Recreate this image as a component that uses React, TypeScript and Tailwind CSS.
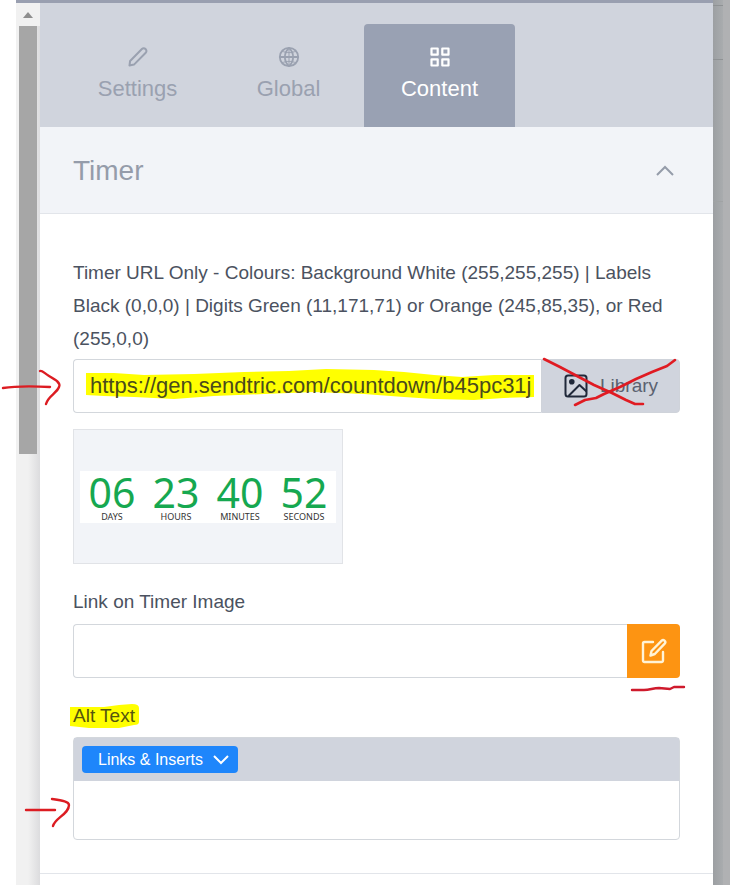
import { useState } from "react";
import type { ReactNode } from "react";
import clsx from "clsx";

const tabs = [
  { id: "settings", label: "Settings", icon: <PencilIcon /> },
  { id: "global", label: "Global", icon: <GlobeIcon /> },
  { id: "content", label: "Content", icon: <GridIcon /> },
];

const countdown = [
  { value: "06", label: "DAYS" },
  { value: "23", label: "HOURS" },
  { value: "40", label: "MINUTES" },
  { value: "52", label: "SECONDS" },
];

function PencilIcon() {
  return (
    <svg width="22" height="22" viewBox="0 0 22 22" fill="none" stroke="currentColor" strokeWidth="2" strokeLinejoin="round">
      <path d="M2.500 19.500l.6-4.500L14.900 3a2.500 2.500 0 0 1 3.600 0l.2.200a2.500 2.500 0 0 1 0 3.600L7 18.600z" />
    </svg>
  );
}

function GlobeIcon() {
  return (
    <svg width="22" height="22" viewBox="0 0 22 22" fill="none" stroke="currentColor" strokeWidth="1.800">
      <circle cx="11" cy="11" r="9.200" />
      <path d="M11 1.800C5.500 7 5.500 15 11 20.200M11 1.800C16.500 7 16.500 15 11 20.200M1.800 11h18.400" />
      <path d="M11 1.800v18.400M4 5c4 2.200 10 2.200 14 0M4 17c4-2.200 10-2.200 14 0" strokeWidth="1" />
    </svg>
  );
}

function GridIcon() {
  return (
    <svg width="22" height="22" viewBox="0 0 22 22" fill="none" stroke="currentColor" strokeWidth="2.200" strokeLinejoin="round">
      <path d="M2.500 2.500h6.200v6.200H2.500zM13.300 2.500h6.200v6.200h-6.200zM2.500 13.300h6.200v6.200H2.500zM13.300 13.300h6.200v6.200h-6.200z" />
    </svg>
  );
}

function ImageIcon() {
  return (
    <svg width="24" height="24" viewBox="0 0 24 24" fill="none" stroke="currentColor" strokeWidth="2" strokeLinejoin="round">
      <rect x="1.5" y="1.5" width="21" height="21" rx="2.5" />
      <circle cx="7.8" cy="7.8" r="1.8" fill="currentColor" />
      <path d="M4.5 22L15.5 11l7 6.5" />
    </svg>
  );
}

function EditIcon() {
  return (
    <svg width="28" height="28" viewBox="0 0 28 28" fill="none" stroke="currentColor" strokeWidth="2.400" strokeLinecap="round" strokeLinejoin="round">
      <path d="M13 5H4.500A1.500 1.500 0 0 0 3 6.500v17A1.500 1.500 0 0 0 4.500 25h17a1.500 1.500 0 0 0 1.500-1.500V15" />
      <path d="M10.500 18.500l1-4.500L21.700 3.600a2 2 0 0 1 2.800 0l.2.200a2 2 0 0 1 0 2.800L14.800 17z" />
    </svg>
  );
}

function Arrow({ className, d }: { className: string; d: string }) {
  return (
    <svg
      className={clsx("pointer-events-none absolute", className)}
      viewBox="0 0 62 40"
      width="62"
      height="40"
      fill="none"
      stroke="#dc1c22"
      strokeWidth="2.4"
      strokeLinecap="round"
      strokeLinejoin="round"
    >
      <path d={d} />
    </svg>
  );
}

function Tab({ active, icon, label, onClick }: { active: boolean; icon: ReactNode; label: string; onClick: () => void }) {
  return (
    <button
      type="button"
      role="tab"
      aria-selected={active}
      onClick={onClick}
      className={clsx(
        "flex w-[151px] flex-col items-center gap-2 rounded-t pt-[22px] pb-[25px] text-[22px] leading-[26px]",
        active ? "bg-[#99a1b3] text-white" : "text-[#9aa1b0]"
      )}
    >
      {icon}
      {label}
    </button>
  );
}

export default function App() {
  const [tab, setTab] = useState("content");
  const [url, setUrl] = useState("https://gen.sendtric.com/countdown/b45pc31j");
  const [link, setLink] = useState("");
  const [alt, setAlt] = useState("");

  return (
    <div className="flex min-h-screen bg-white pl-4 font-['Liberation_Sans',Arial,sans-serif] text-[#4b5260]">
      {/* scrollbar */}
      <div className="flex w-6 shrink-0 flex-col items-center border-t-[3px] border-[#999fb0] bg-linear-to-r from-[#f1f1f1] from-50% to-[#dcdcde]">
        <div className="flex h-[23px] w-full items-center justify-center bg-[#f1f1f1]">
          <svg width="10" height="6" viewBox="0 0 10 6" fill="#8e8e8e">
            <path d="M0 6L5 0l5 6z" />
          </svg>
        </div>
        <div className="h-[428px] w-[18px] bg-[#a6a6a6]" />
      </div>

      <main className="min-w-0 flex-1 border-t-[3px] border-[#999fb0]">
        <div role="tablist" className="flex bg-[#d0d4dd] pt-[21px] pl-[22px]">
          {tabs.map((t) => (
            <Tab key={t.id} icon={t.icon} label={t.label} active={tab === t.id} onClick={() => setTab(t.id)} />
          ))}
        </div>

        <button
          type="button"
          className="flex h-[87px] w-full items-center justify-between border-b border-[#e2e5ea] bg-[#f2f4f8] pt-0.5 pr-[38px] pl-[33px] text-[28px] text-[#959caa]"
        >
          Timer
          <svg width="20" height="12" viewBox="0 0 20 12" fill="none" stroke="currentColor" strokeWidth="2">
            <path d="M2 10l8-8 8 8" />
          </svg>
        </button>

        <div className="border-b border-[#e2e5ea] px-[33px] pt-[42px] pb-[33px]">
          <label htmlFor="timer-url" className="block text-[19px] leading-[33px]">
            Timer URL Only - Colours: Background White (255,255,255) | Labels Black (0,0,0) | Digits Green (11,171,71) or
            Orange (245,85,35), or Red (255,0,0)
          </label>

          <div className="relative mt-1 flex h-[54px]">
            <div className="relative min-w-0 flex-1 rounded-l border border-r-0 border-[#d3d7dc]">
              <svg className="absolute top-2 left-2.5" width="452" height="36" viewBox="0 0 452 36" fill="#ffff00">
                <path d="M2 5L30 5 60 7 110 6 160 4 205 3 242 1 290 2 320 4 350 7 378 9 410 7 450 7 450 29 420 30 390 32 350 31 320 29 280 26 230 24 180 26 130 28 90 31 50 29 20 28 2 27z" />
              </svg>
              <input
                id="timer-url"
                type="text"
                value={url}
                onChange={(e) => setUrl(e.target.value)}
                className="relative h-full w-full bg-transparent pr-1 pl-4 text-[22px] text-[#4a4b1c] outline-none"
              />
            </div>
            <button
              type="button"
              className="relative flex w-[139px] items-center gap-3 rounded-r border border-[#cfd3da] bg-[#d0d4dd] pl-[22px] text-[19px] text-[#5b6270]"
            >
              <span className="text-[#20293a]">
                <ImageIcon />
              </span>
              Library
              <svg
                className="pointer-events-none absolute -top-1 left-0"
                width="139"
                height="54"
                viewBox="0 0 139 54"
                fill="none"
                stroke="#e01b22"
                strokeWidth="2.600"
                strokeLinecap="round"
                strokeLinejoin="round"
              >
                <path d="M2 3L18 11 35 20 52 29 70 37 84 44 93 48 101 48" />
                <path d="M133 4L125 10 110 16 94 23 78 31 62 38 54 42 43 44 33 49" />
              </svg>
            </button>
            <Arrow className="top-2 -left-[72px]" d="M2 21C15 19 30 19 49 20M39 4C41 3 43 6 48 9 55 13 60 16 58 20 56 26 47 29 45 37" />
          </div>

          <div className="mt-4 flex h-[135px] w-[270px] items-center justify-center border border-[#e1e3e7] bg-[#f2f4f8]">
            <div className="grid h-[52px] w-64 grid-cols-4 bg-white font-['Noto_Sans',sans-serif]">
              {countdown.map((c) => (
                <div key={c.label} className="flex flex-col items-center">
                  <span className="text-[41px] leading-[42px] text-[#16a850]">{c.value}</span>
                  <span className="text-[9px] leading-[8px] text-[#333333]">{c.label}</span>
                </div>
              ))}
            </div>
          </div>

          <label htmlFor="timer-link" className="mt-[25px] block text-[19px] leading-[26px]">
            Link on Timer Image
          </label>
          <div className="relative mt-[9px] flex h-[54px]">
            <input
              id="timer-link"
              type="text"
              value={link}
              onChange={(e) => setLink(e.target.value)}
              className="min-w-0 flex-1 rounded-l border border-r-0 border-[#d3d7dc] px-4 text-[22px] outline-none"
            />
            <button
              type="button"
              aria-label="Edit link"
              className="flex w-[53px] items-center justify-center rounded-r bg-[#fd9412] text-[#fff3d6]"
            >
              <EditIcon />
            </button>
            <svg
              className="pointer-events-none absolute top-[60px] -right-1.5"
              width="56"
              height="8"
              viewBox="0 0 56 8"
              fill="none"
              stroke="#cf1a2c"
              strokeWidth="2.400"
              strokeLinecap="round"
              strokeLinejoin="round"
            >
              <path d="M2 6H14C20 6 23 4 29 4L40 5 44 3H54" />
            </svg>
          </div>

          <div className="relative mt-[25px]">
            <svg className="absolute top-0 -left-1" width="72" height="28" viewBox="0 0 72 28" fill="#ffff00">
              <path d="M1 4L35 4 50 2 63 1Q70 1 70 5V19Q70 22 65 22L50 25 20 25 1 23z" />
            </svg>
            <label htmlFor="alt-text" className="relative block w-fit text-[19px] leading-[26px] text-[#55560f]">
              Alt Text
            </label>
          </div>
          <div className="relative mt-2 rounded border border-[#d3d7dc]">
            <div className="flex h-[43px] items-center bg-[#d0d4dd] pl-2">
              <button
                type="button"
                className="flex h-[27px] items-center gap-2.5 rounded bg-[#1e86fb] pr-[9px] pl-4 text-base text-white"
              >
                Links &amp; Inserts
                <svg width="16" height="10" viewBox="0 0 16 10" fill="none" stroke="currentColor" strokeWidth="2">
                  <path d="M1 1l7 7 7-7" />
                </svg>
              </button>
            </div>
            <textarea
              id="alt-text"
              value={alt}
              onChange={(e) => setAlt(e.target.value)}
              className="block h-[58px] w-full resize-none px-4 py-3 text-[22px] outline-none"
            />
            <Arrow className="top-[52px] -left-[50px]" d="M2 20H31M28 9C35 10 45 11 45 15 45 24 31 28 29 36" />
          </div>
        </div>
      </main>

      {/* dimmed page behind the panel */}
      <div className="flex w-[17px] shrink-0 bg-[#b0b1b3]">
        <div className="w-2.5 bg-linear-to-r from-[#9c9fa2] to-[#a9acae]">
          <div className="mt-[5px] h-[55px] border-y border-[#8f9294]" />
          <div className="h-[142px] border-b border-[#a0a3a4]" />
        </div>
      </div>
    </div>
  );
}
